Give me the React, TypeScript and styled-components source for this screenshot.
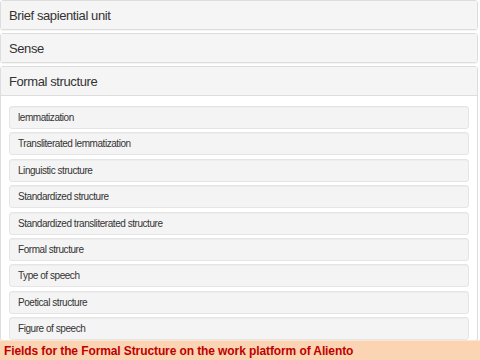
import React from 'react';
import styled, { createGlobalStyle } from 'styled-components';

const GlobalStyle = createGlobalStyle`
  html, body {
    margin: 0;
    padding: 0;
    background: #ffffff;
  }
  body {
    font-family: "Liberation Sans", Arial, sans-serif;
    color: #333;
  }
`;

const Page = styled.div`
  width: 480px;
  height: 360px;
  display: flex;
  flex-direction: column;
  overflow: hidden;
`;

const Accordion = styled.div`
  flex: 1;
  min-height: 0;
  overflow: hidden;
  padding-right: 2px;
  display: flex;
  flex-direction: column;
  gap: 3px;
`;

const Panel = styled.div`
  border: 1px solid #dddddd;
  border-radius: 3px;
  background: #ffffff;
  box-shadow: 0 1px 1px rgba(0, 0, 0, 0.05);
  flex-shrink: 0;
`;

const PanelHeading = styled.div<{ $open?: boolean }>`
  height: 28px;
  display: flex;
  align-items: center;
  padding: 0 8px;
  background: #f5f5f5;
  font-size: 13px;
  letter-spacing: -0.4px;
  color: #333;
  border-bottom: ${(p) => (p.$open ? '1px solid #dddddd' : 'none')};
`;

const PanelBody = styled.div`
  padding: 10px 8px 0;
  display: flex;
  flex-direction: column;
  gap: 3.4px;
`;

const Field = styled.div`
  height: 21px;
  display: flex;
  align-items: center;
  padding: 0 8px;
  background: #f4f4f4;
  border: 1px solid #e5e5e5;
  border-radius: 3px;
  box-shadow: inset 0 1px 1px rgba(0, 0, 0, 0.03);
  font-size: 10px;
  letter-spacing: -0.45px;
  color: #333;
`;

const Caption = styled.div`
  height: 19px;
  flex-shrink: 0;
  background: #fbd4b4;
  border-top: 1px solid #fde5d2;
  display: flex;
  align-items: center;
  padding-left: 4px;
  font-size: 12px;
  letter-spacing: -0.1px;
  font-weight: bold;
  color: #c00000;
`;

const fields = [
  'lemmatization',
  'Transliterated lemmatization',
  'Linguistic structure',
  'Standardized structure',
  'Standardized transliterated structure',
  'Formal structure',
  'Type of speech',
  'Poetical structure',
  'Figure of speech',
];

export default function App() {
  return (
    <Page>
      <GlobalStyle />
      <Accordion>
        <Panel>
          <PanelHeading>Brief sapiential unit</PanelHeading>
        </Panel>
        <Panel>
          <PanelHeading>Sense</PanelHeading>
        </Panel>
        <Panel>
          <PanelHeading $open>Formal structure</PanelHeading>
          <PanelBody>
            {fields.map((f) => (
              <Field key={f}>{f}</Field>
            ))}
          </PanelBody>
        </Panel>
      </Accordion>
      <Caption>Fields for the Formal Structure on the work platform of Aliento</Caption>
    </Page>
  );
}
